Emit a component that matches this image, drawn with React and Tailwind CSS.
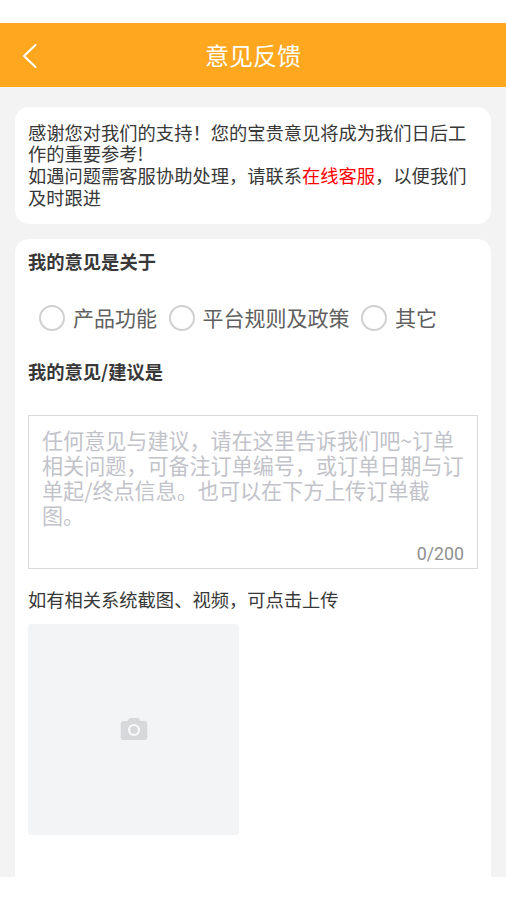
import React, { useState } from 'react';

const topics = ['产品功能', '平台规则及政策', '其它'];

const placeholder =
  '任何意见与建议，请在这里告诉我们吧~订单相关问题，可备注订单编号，或订单日期与订单起/终点信息。也可以在下方上传订单截图。';

function NavBar() {
  return (
    <header className="grid h-16 shrink-0 grid-cols-[80px_1fr_80px] items-center bg-[#ffa71f] text-white">
      <button type="button" aria-label="返回" className="pt-0.5 pl-[22px]">
        <svg width="16" height="26" viewBox="0 0 16 26" fill="none" stroke="currentColor" strokeWidth="2" strokeLinecap="round">
          <path d="M13.500 2 2 13l11.500 11" />
        </svg>
      </button>
      <h1 className="text-center text-[24px] leading-8">意见反馈</h1>
      <span />
    </header>
  );
}

function CameraIcon() {
  return (
    <svg width="28" height="24" viewBox="0 0 28 24">
      <path
        fill="#d7d8da"
        d="M10.500 1h7a2 2 0 0 1 1.700 1L20.500 4H24.500a2.800 2.800 0 0 1 2.800 2.800v13.400A2.800 2.800 0 0 1 24.500 23h-21a2.800 2.800 0 0 1-2.800-2.800V6.800A2.800 2.800 0 0 1 3.500 4h4l1.300-2a2 2 0 0 1 1.700-1Z"
      />
      <circle cx="14" cy="13" r="5" fill="none" stroke="#f8f9fa" strokeWidth="2.200" />
    </svg>
  );
}

export default function App() {
  const [topic, setTopic] = useState(null);
  const [content, setContent] = useState('');

  return (
    <div className="flex h-[900px] w-[506px] flex-col overflow-hidden bg-white pt-[23px] pb-[23px] font-['Noto_Sans_CJK_SC',sans-serif] text-[#383838]">
      <NavBar />
      <main className="flex min-h-0 flex-1 flex-col gap-[15px] bg-[#f3f3f3] px-[15px] pt-[19.5px]">
        <section className="h-[117px] shrink-0 rounded-[14px] bg-white px-[13px] pt-[15px] text-[18.27px] leading-[21.7px] whitespace-nowrap">
          感谢您对我们的支持！您的宝贵意见将成为我们日后工
          <br />
          作的重要参考!
          <br />
          如遇问题需客服协助处理，请联系<span className="text-[#f00]">在线客服</span>，以便我们
          <br />
          及时跟进
        </section>

        <section className="flex-1 rounded-t-[14px] bg-white px-[13px] pt-[10px]">
          <h2 className="text-[18.3px] leading-6 font-bold">我的意见是关于</h2>
          <div className="mt-[33px] flex h-6 items-center gap-[11.5px] text-[21px] text-[#606060]">
            {topics.map((name) => (
              <button key={name} type="button" onClick={() => setTopic(name)} className="flex items-center gap-2 whitespace-nowrap first:ml-[11px]">
                <span className="flex size-[26px] items-center justify-center rounded-full border-2 border-[#d0d0d1]">
                  {topic === name && <span className="size-3 rounded-full bg-[#ffa71f]" />}
                </span>
                {name}
              </button>
            ))}
          </div>

          <h2 className="mt-[29px] text-[18.3px] leading-6 font-bold">我的意见/建议是</h2>
          <div className="mt-8 flex h-[154px] flex-col border border-[#d8d9dc] pt-3 pb-[2px]">
            <textarea
              value={content}
              maxLength={200}
              placeholder={placeholder}
              onChange={(e) => setContent(e.target.value)}
              className="block w-full flex-1 resize-none overflow-hidden pr-[12px] pl-[13px] text-[21.08px] leading-[25px] outline-none placeholder:text-[#c2c3ca]"
            />
            <span className="pr-[13px] text-right font-[Roboto,sans-serif] text-[17.8px] leading-6 text-[#909090]">
              {content.length}/200
            </span>
          </div>

          <p className="mt-[18px] text-[18.27px] leading-6">如有相关系统截图、视频，可点击上传</p>
          <button type="button" aria-label="上传" className="mt-[13px] flex size-[211px] items-center justify-center rounded-[3px] bg-[#f3f4f6]">
            <CameraIcon />
          </button>
        </section>
      </main>
    </div>
  );
}
